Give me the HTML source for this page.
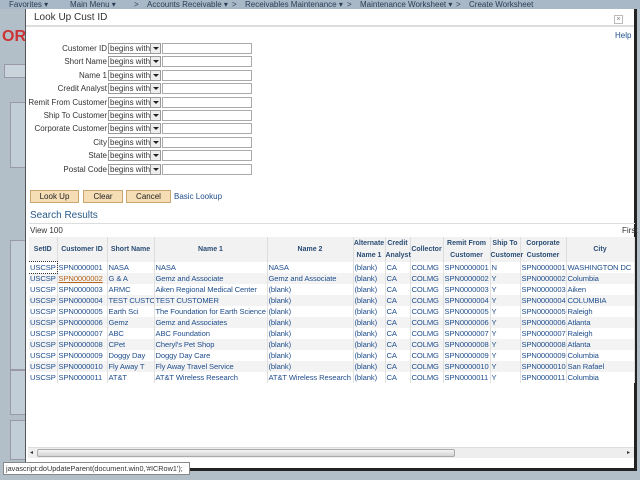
<!DOCTYPE html>
<html><head><style>
*{margin:0;padding:0;box-sizing:border-box}
body{width:640px;height:480px;overflow:hidden;background:#b3bfc8;font-family:"Liberation Sans",Arial,sans-serif;font-size:8px;position:relative;color:#333}
.a{position:absolute}
.nav{top:0;height:9px;color:#2a3d55;font-size:8px;white-space:nowrap;line-height:9px}
.dlg{left:25px;top:9px;width:612px;height:462px;background:#fff;border-left:1px solid #555;border-right:3px solid #222;border-bottom:3px solid #222}
.lbl{width:80px;text-align:right;color:#333}
.sel{width:53px;height:11px;border:1px solid #999;background:#fff;font-size:8px;line-height:9px;padding-left:1px}
.sel b{position:absolute;right:0;top:0;width:10px;height:9px;border-left:1px solid #999;background:#eee}
.sel b:after{content:"";position:absolute;left:2px;top:3px;border:3px solid transparent;border-top:3px solid #222}
.inp{width:90px;height:11px;border:1px solid #aaa}
.btn{height:13px;background:#f5ddb5;border:1px solid #c9a56f;text-align:center;line-height:11px;color:#222;font-size:8px}
table{border-collapse:collapse;font-size:7.6px}
td{border-right:1px solid #e0e0e0;height:11px;padding:0 0 0 1px;white-space:nowrap;overflow:hidden;color:#1f4e8c;line-height:10px;letter-spacing:-0.1px}
th{height:25px;border-right:1px solid #ddd;font-weight:bold;color:#2a4d74;font-size:7px;background:#f2f2f2;line-height:12px;font-weight:bold}
tr.g td{background:#f3f3f3}
</style></head><body>
<div class="a" style="left:0;top:0;width:640px;height:9px;background:#a9b8c6"></div>
<div class="a nav" style="left:9px">Favorites ▾</div>
<div class="a nav" style="left:70px">Main Menu ▾</div>
<div class="a nav" style="left:134px">&gt;</div>
<div class="a nav" style="left:147px">Accounts Receivable ▾</div>
<div class="a nav" style="left:232px">&gt;</div>
<div class="a nav" style="left:245px">Receivables Maintenance ▾</div>
<div class="a nav" style="left:347px">&gt;</div>
<div class="a nav" style="left:360px">Maintenance Worksheet ▾</div>
<div class="a nav" style="left:456px">&gt;</div>
<div class="a nav" style="left:469px">Create Worksheet</div>
<div class="a" style="left:2px;top:28px;color:#c33;font-size:16px;font-weight:bold">OR</div>
<div class="a" style="left:4px;top:64px;width:24px;height:14px;background:#c8d3dc;border:1px solid #99a"></div>
<div class="a" style="left:10px;top:102px;width:16px;height:66px;background:#c2ced7;border:1px solid #99a"></div>
<div class="a" style="left:10px;top:240px;width:16px;height:130px;background:#c2ced7;border:1px solid #99a"></div>
<div class="a" style="left:10px;top:370px;width:16px;height:45px;background:#c2ced7;border:1px solid #99a"></div>
<div class="a" style="left:10px;top:420px;width:16px;height:40px;background:#c2ced7;border:1px solid #99a"></div>

<div class="a dlg">
 <div class="a" style="left:0;top:0;width:608px;height:18px;border-bottom:2px solid #ddd;font-size:10px;line-height:18px;padding-left:8px;color:#333">Look Up Cust ID</div>
 <div class="a" style="left:588px;top:6px;width:9px;height:9px;border:1px solid #bbb;font-size:7px;line-height:7px;text-align:center;color:#777">×</div>
 <div class="a" style="left:589px;top:22px;color:#1f4e8c">Help</div>
 <div id="form"></div>
 <div class="a btn" style="left:4px;top:181px;width:49px">Look Up</div>
 <div class="a btn" style="left:57px;top:181px;width:40px">Clear</div>
 <div class="a btn" style="left:100px;top:181px;width:45px">Cancel</div>
 <div class="a" style="left:148px;top:183px;color:#1f4e8c">Basic Lookup</div>
 <div class="a" style="left:4px;top:201px;font-size:10px;color:#2a5a8a">Search Results</div>
 <div class="a" style="left:3px;top:214px;width:606px;height:1px;background:#ddd"></div>
 <div class="a" style="left:4px;top:217px">View 100</div>
 <div class="a" style="left:596px;top:217px">First</div>
 <div class="a" style="left:3px;top:228px;width:606px;height:152px;overflow:hidden">
 <table style="width:620px;table-layout:fixed">
 <colgroup><col style="width:28px"><col style="width:50px"><col style="width:47px"><col style="width:113px"><col style="width:86px"><col style="width:32px"><col style="width:25px"><col style="width:33px"><col style="width:47px"><col style="width:30px"><col style="width:46px"><col style="width:68px"><col style="width:15px"></colgroup>
 <tr><th>SetID</th><th>Customer ID</th><th>Short Name</th><th>Name 1</th><th>Name 2</th><th>Alternate Name 1</th><th>Credit Analyst</th><th>Collector</th><th>Remit From Customer</th><th>Ship To Customer</th><th>Corporate Customer</th><th>City</th><th></th></tr>
 <tr><td style="outline:1px dotted #333">USCSP</td><td>SPN0000001</td><td>NASA</td><td>NASA</td><td>NASA</td><td>(blank)</td><td>CA</td><td>COLMG</td><td>SPN0000001</td><td>N</td><td>SPN0000001</td><td>WASHINGTON DC</td><td></td></tr>
 <tr class="g"><td>USCSP</td><td style="color:#b5651d;text-decoration:underline">SPN0000002</td><td>G &amp; A</td><td>Gemz and Associate</td><td>Gemz and Associate</td><td>(blank)</td><td>CA</td><td>COLMG</td><td>SPN0000002</td><td>Y</td><td>SPN0000002</td><td>Columbia</td><td></td></tr>
 <tr><td>USCSP</td><td>SPN0000003</td><td>ARMC</td><td>Aiken Regional Medical Center</td><td>(blank)</td><td>(blank)</td><td>CA</td><td>COLMG</td><td>SPN0000003</td><td>Y</td><td>SPN0000003</td><td>Aiken</td><td></td></tr>
 <tr class="g"><td>USCSP</td><td>SPN0000004</td><td>TEST CUSTO</td><td>TEST CUSTOMER</td><td>(blank)</td><td>(blank)</td><td>CA</td><td>COLMG</td><td>SPN0000004</td><td>Y</td><td>SPN0000004</td><td>COLUMBIA</td><td></td></tr>
 <tr><td>USCSP</td><td>SPN0000005</td><td>Earth Sci</td><td>The Foundation for Earth Science</td><td>(blank)</td><td>(blank)</td><td>CA</td><td>COLMG</td><td>SPN0000005</td><td>Y</td><td>SPN0000005</td><td>Raleigh</td><td></td></tr>
 <tr class="g"><td>USCSP</td><td>SPN0000006</td><td>Gemz</td><td>Gemz and Associates</td><td>(blank)</td><td>(blank)</td><td>CA</td><td>COLMG</td><td>SPN0000006</td><td>Y</td><td>SPN0000006</td><td>Atlanta</td><td></td></tr>
 <tr><td>USCSP</td><td>SPN0000007</td><td>ABC</td><td>ABC Foundation</td><td>(blank)</td><td>(blank)</td><td>CA</td><td>COLMG</td><td>SPN0000007</td><td>Y</td><td>SPN0000007</td><td>Raleigh</td><td></td></tr>
 <tr class="g"><td>USCSP</td><td>SPN0000008</td><td>CPet</td><td>Cheryl's Pet Shop</td><td>(blank)</td><td>(blank)</td><td>CA</td><td>COLMG</td><td>SPN0000008</td><td>Y</td><td>SPN0000008</td><td>Atlanta</td><td></td></tr>
 <tr><td>USCSP</td><td>SPN0000009</td><td>Doggy Day</td><td>Doggy Day Care</td><td>(blank)</td><td>(blank)</td><td>CA</td><td>COLMG</td><td>SPN0000009</td><td>Y</td><td>SPN0000009</td><td>Columbia</td><td></td></tr>
 <tr class="g"><td>USCSP</td><td>SPN0000010</td><td>Fly Away T</td><td>Fly Away Travel Service</td><td>(blank)</td><td>(blank)</td><td>CA</td><td>COLMG</td><td>SPN0000010</td><td>Y</td><td>SPN0000010</td><td>San Rafael</td><td></td></tr>
 <tr><td>USCSP</td><td>SPN0000011</td><td>AT&amp;T</td><td>AT&amp;T Wireless Research</td><td>AT&amp;T Wireless Research</td><td>(blank)</td><td>CA</td><td>COLMG</td><td>SPN0000011</td><td>Y</td><td>SPN0000011</td><td>Columbia</td><td></td></tr>
 </table></div>
 <div class="a" style="left:2px;top:438px;width:606px;height:11px;background:#eee;border-top:1px solid #ddd"></div>
 <div class="a" style="left:4px;top:440px;font-size:6px;color:#333">◂</div>
 <div class="a" style="left:601px;top:440px;font-size:6px;color:#333">▸</div>
 <div class="a" style="left:11px;top:440px;width:418px;height:8px;background:linear-gradient(#f4f4f4,#d4d4d4);border:1px solid #aaa;border-radius:2px"></div>
</div>
<div class="a" style="left:3px;top:462px;width:187px;height:13px;background:#fff;border:1px solid #888;font-size:7.3px;line-height:11px;padding-left:2px;color:#333;white-space:nowrap;overflow:hidden">javascript:doUpdateParent(document.win0,'#ICRow1');</div>
<script>
var L=["Customer ID","Short Name","Name 1","Credit Analyst","Remit From Customer","Ship To Customer","Corporate Customer","City","State","Postal Code"],h="";
L.forEach(function(t,i){var y=34+i*13.4;h+='<div class="a lbl" style="left:1px;top:'+(y+1)+'px">'+t+'</div><div class="a sel" style="left:82px;top:'+y+'px">begins with<b></b></div><div class="a inp" style="left:136px;top:'+y+'px"></div>';});
document.getElementById("form").outerHTML=h;
</script>
</body></html>
